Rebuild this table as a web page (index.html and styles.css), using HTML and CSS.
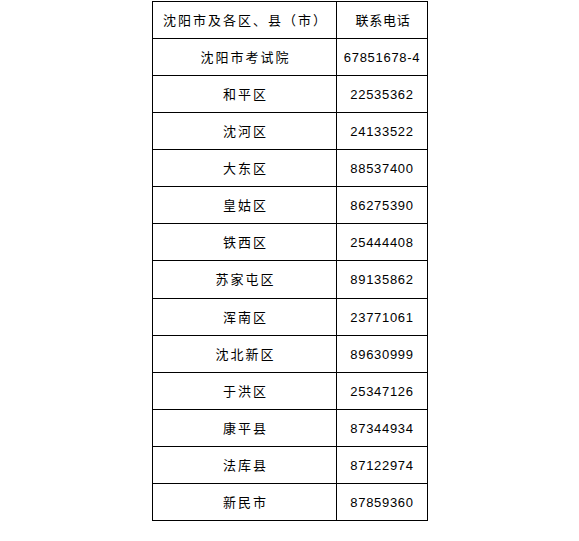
FILE: index.html
```html
<!DOCTYPE html>
<html lang="zh-CN">
<head>
<meta charset="utf-8">
<title>联系电话</title>
<link rel="stylesheet" href="styles.css">
</head>
<body>
<div class="table">
  <div class="cell name">沈阳市及各区、县（市）</div><div class="cell phone cjk">联系电话</div>
  <div class="cell name">沈阳市考试院</div><div class="cell phone">67851678-4</div>
  <div class="cell name">和平区</div><div class="cell phone">22535362</div>
  <div class="cell name">沈河区</div><div class="cell phone">24133522</div>
  <div class="cell name">大东区</div><div class="cell phone">88537400</div>
  <div class="cell name">皇姑区</div><div class="cell phone">86275390</div>
  <div class="cell name">铁西区</div><div class="cell phone">25444408</div>
  <div class="cell name">苏家屯区</div><div class="cell phone">89135862</div>
  <div class="cell name">浑南区</div><div class="cell phone">23771061</div>
  <div class="cell name">沈北新区</div><div class="cell phone">89630999</div>
  <div class="cell name">于洪区</div><div class="cell phone">25347126</div>
  <div class="cell name">康平县</div><div class="cell phone">87344934</div>
  <div class="cell name">法库县</div><div class="cell phone">87122974</div>
  <div class="cell name">新民市</div><div class="cell phone">87859360</div>
</div>
</body>
</html>
```
FILE: styles.css
```css
html, body {
  margin: 0;
  padding: 0;
  background: #ffffff;
}

body {
  padding-top: 1px;
}

.table {
  margin-left: 152px;
  width: 276px;
  box-sizing: border-box;
  display: grid;
  grid-template-columns: 184px 91px;
  grid-auto-rows: 37.07px;
  border-left: 1px solid #000;
  border-top: 1px solid #000;
  color: #000;
}

.cell {
  box-sizing: border-box;
  border-right: 1px solid #000;
  border-bottom: 1px solid #000;
  display: flex;
  align-items: center;
  justify-content: center;
  white-space: nowrap;
}

.name, .cjk {
  font-family: "Noto Sans CJK SC", "Noto Sans", sans-serif;
  font-size: 13px;
  letter-spacing: 2px;
  padding-left: 2px;
  padding-bottom: 1px;
}

.phone {
  font-family: "Liberation Sans", sans-serif;
  font-size: 13px;
  letter-spacing: 0.7px;
  padding-top: 1px;
}

.phone.cjk {
  font-family: "Noto Sans CJK SC", "Noto Sans", sans-serif;
  padding-top: 0;
}
```
